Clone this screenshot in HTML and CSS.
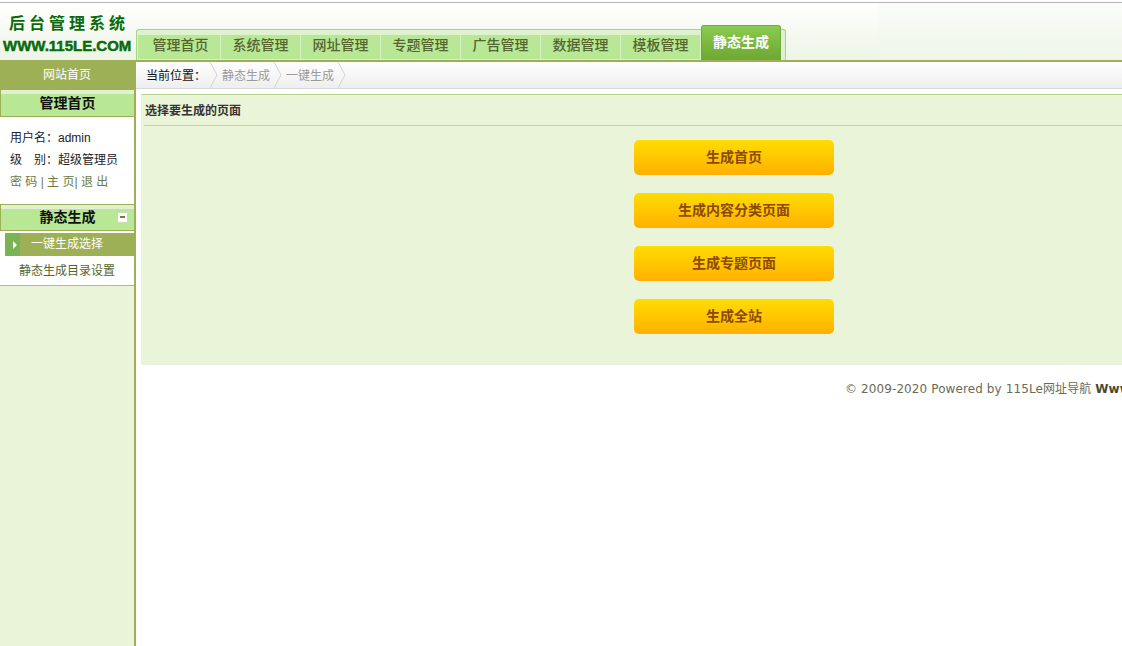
FILE: index.html
```html
<!DOCTYPE html>
<html lang="zh-CN">
<head>
<meta charset="utf-8">
<title>后台管理系统</title>
<link rel="stylesheet" href="styles.css">
</head>
<body>
<div class="page">
  <header class="header">
    <div class="logo">
      <div class="logo-cn">后台管理系统</div>
      <div class="logo-en">WWW.115LE.COM</div>
    </div>
    <nav class="tabs">
      <a class="tab tab-first">管理首页</a>
      <a class="tab">系统管理</a>
      <a class="tab">网址管理</a>
      <a class="tab">专题管理</a>
      <a class="tab">广告管理</a>
      <a class="tab">数据管理</a>
      <a class="tab">模板管理</a>
      <a class="tab-active">静态生成</a>
    </nav>
  </header>
  <div class="body">
    <aside class="side">
      <div class="home-link">网站首页</div>
      <div class="side-head">管理首页</div>
      <div class="user">
        <div class="user-row">用户名：admin</div>
        <div class="user-row">级<span class="gap"></span>别：超级管理员</div>
        <div class="user-row user-links">密 码 | 主 页| 退 出</div>
      </div>
      <div class="side-head side-head-tool">静态生成<span class="minus"></span></div>
      <div class="menu">
        <div class="menu-active"><span class="menu-arrow"></span><span class="menu-active-text">一键生成选择</span></div>
        <div class="menu-item">静态生成目录设置</div>
      </div>
    </aside>
    <main class="main">
      <div class="crumbs">
        <span class="crumb-label">当前位置：</span>
        <svg class="chev" width="9" height="26" viewBox="0 0 9 26"><path d="M1 0 L8 13 L1 26" fill="none" stroke="#d2d2d2"/></svg>
        <span class="crumb">静态生成</span>
        <svg class="chev" width="9" height="26" viewBox="0 0 9 26"><path d="M1 0 L8 13 L1 26" fill="none" stroke="#d2d2d2"/></svg>
        <span class="crumb">一键生成</span>
        <svg class="chev" width="9" height="26" viewBox="0 0 9 26"><path d="M1 0 L8 13 L1 26" fill="none" stroke="#d2d2d2"/></svg>
      </div>
      <section class="panel">
        <h2 class="panel-title">选择要生成的页面</h2>
        <div class="actions">
          <a class="btn">生成首页</a>
          <a class="btn">生成内容分类页面</a>
          <a class="btn">生成专题页面</a>
          <a class="btn">生成全站</a>
        </div>
      </section>
      <footer class="foot">© 2009-2020 Powered by 115Le网址导航 <b>Www.115Le.Com</b></footer>
    </main>
  </div>
</div>
</body>
</html>
```
FILE: styles.css
```css
* { box-sizing: border-box; }
html, body { margin: 0; padding: 0; height: 100%; overflow: hidden; background: #fff; }
body { font: 12px/1 "Liberation Sans", "Noto Sans CJK SC", sans-serif; color: #222; }
.page { width: 1122px; height: 646px; display: flex; flex-direction: column; overflow: hidden; }

.header {
  height: 60px; flex: none; display: flex; align-items: flex-end;
  border-top: 1px solid #b4b4b4; margin-top: 2px;
  border-bottom: 2px solid #9eb055;
  background: linear-gradient(90deg, rgba(241,246,236,0) 877px, rgba(241,246,236,.3) 878px),
              linear-gradient(#fff, #edf5e6);
}
.logo { width: 136px; height: 100%; flex: none; padding-top: 9px; color: #0a6a0a; overflow: hidden; }
.logo-cn {
  font: 700 16px/20px "Noto Sans CJK SC", sans-serif; letter-spacing: 4px;
  padding-left: 9px; white-space: nowrap;
}
.logo-en {
  font: 700 15px/20px "Liberation Sans", sans-serif; padding-left: 3px; margin-top: 4px;
  white-space: nowrap; -webkit-text-stroke: .5px #0a6a0a;
}
.tabs {
  width: 650px; height: 31px; display: flex; padding: 5px 3px 1px 4px; position: relative;
  border: 1px solid #a5d67e; border-bottom: 0; border-radius: 3px 3px 0 0;
  background: #dff2cf;
}
.tab {
  width: 80px; flex: none; height: 25px; text-align: center;
  font: 500 14px/19px "Noto Sans CJK SC", sans-serif; color: #56642f;
  background: #b8e896; border-right: 1px solid #d9f0c6;
  border-bottom: 1px solid #d9f0c6;
}
.tab-first { width: 83px; margin-left: -3px; padding-left: 3px; }
.tab-active {
  position: absolute; left: 564px; top: -5px; width: 80px; height: 35px;
  text-align: center; font: 700 14px/30px "Noto Sans CJK SC", sans-serif; color: #fff;
  border: 1px solid #6fab3c; border-bottom: 0; border-radius: 3px 3px 0 0;
  background: linear-gradient(#8acb50, #6ea731);
}

.body { flex: 1; display: flex; min-height: 0; }
.side {
  width: 136px; flex: none; background: #eaf4d9;
  border-right: 2px solid #9eb055;
}
.home-link { height: 28px; background: #9eb055; color: #fff; font-size: 12px; line-height: 26px; text-align: center; }
.side-head {
  height: 27px; text-align: center; position: relative; color: #111;
  font: 700 14px/24px "Noto Sans CJK SC", sans-serif;
  background: linear-gradient(#e0f0d0 4px, #b8e896 4px);
  border: 1px solid #9eb055; border-width: 0 0 1px 1px;
}
.side-head-tool { border-top: 1px solid #9eb055; line-height: 22px; }
.minus {
  position: absolute; left: 116px; top: 7px; width: 11px; height: 11px; background: #fff;
  border: 1px solid #c8dcae;
}
.minus::after { content: ""; position: absolute; left: 2px; top: 3px; width: 5px; height: 2px; background: #6e7f40; }
.user { height: 87px; background: #fff; padding-top: 10px; padding-left: 10px; }
.user-row { height: 22px; line-height: 22px; color: #222; white-space: nowrap; }
.gap { display: inline-block; width: 12px; }
.user-links { color: #6b7a45; }
.menu { background: #fff; padding-top: 2px; border-bottom: 1px solid #b0b79a; height: 55px; }
.menu-active { margin-left: 5px; height: 23px; display: flex; background: #9eb055; color: #fff; }
.menu-arrow {
  width: 15px; flex: none; background: #7ab355; border-radius: 2px 0 0 2px; position: relative;
}
.menu-arrow::after {
  content: ""; position: absolute; left: 8px; top: 8px;
  border: 4px solid transparent; border-left: 4px solid #fff; border-right: 0;
}
.menu-active-text { padding-left: 11px; line-height: 23px; }
.menu-item { height: 29px; line-height: 30px; text-align: center; color: #56642f; }

.main { flex: 1; min-width: 0; overflow: hidden; }
.crumbs {
  height: 27px; display: flex; align-items: flex-start; padding-left: 10px;
  background: linear-gradient(#fff, #eeeeee); border-bottom: 1px solid #d8d8d8;
  line-height: 29px; color: #9a9a9a;
}
.crumb-label { color: #111; width: 63px; flex: none; white-space: nowrap; }
.chev { flex: none; display: block; }
.crumb { width: 55px; flex: none; padding-left: 4px; white-space: nowrap; }
.panel {
  margin: 5px 0 0 5px; height: 271px; background: #eaf4d9;
  border-top: 1px solid #b7d38a;
}
.panel-title {
  margin: 0 0 0 3px; height: 31px; padding-left: 1px; font-size: 12px; font-weight: 700; line-height: 33px; color: #333;
  border-bottom: 1px solid #c4d3ab;
}
.actions { display: flex; flex-direction: column; align-items: flex-start; gap: 18px; padding: 14px 0 0 493px; }
.btn {
  width: 200px; height: 35px; border-radius: 5px; text-align: center;
  font: 700 14px/33px "Noto Sans CJK SC", sans-serif; color: #8b4a00;
  background: linear-gradient(#ffdd00, #ffb000);
}
.foot {
  padding: 17px 0 0 709px; height: 40px; white-space: nowrap; width: 1100px; letter-spacing: .1px;
  font: 12px/14px "DejaVu Sans", "Noto Sans CJK SC", sans-serif; color: #6b6b55;
}
.foot b { color: #4a4a2a; }
```
